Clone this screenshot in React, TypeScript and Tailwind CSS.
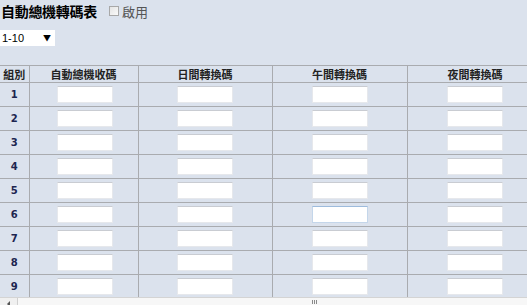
import React from "react";

const cols = ["自動總機收碼", "日間轉換碼", "午間轉換碼", "夜間轉換碼"];
const widths = ["w-[109px]", "w-[134px]", "w-[135px]", "w-[136px]"];
const rows = [1, 2, 3, 4, 5, 6, 7, 8, 9];

const App = () => {
  return (
    <div className="w-[527px] h-[305px] overflow-hidden bg-[#dbe2ed] flex flex-col font-['Noto_Sans_CJK_TC',sans-serif]">
      <div className="h-[297px] overflow-hidden">
        {/* title */}
        <div className="flex items-center h-[20px] pt-[2px] pl-[1px]">
          <span className="text-[14px] font-bold leading-none text-black tracking-[-0.3px] font-['Noto_Sans_CJK_TC',sans-serif]">
            自動總機轉碼表
          </span>
          <span className="ml-[12px] w-[10px] h-[10px] border border-[#a8a8a8] bg-gradient-to-br from-[#e4e4e4] to-[#fafafa]"></span>
          <span className="ml-[3px] text-[13px] leading-none text-[#555] font-['Noto_Sans_CJK_TC',sans-serif]">
            啟用
          </span>
        </div>

        {/* page select */}
        <div className="mt-[10px] w-[55px] h-[16px] bg-white flex items-center justify-between pl-[2px] pr-[4px]">
          <span className="text-[11px] leading-none text-black font-['Liberation_Sans',sans-serif]">1-10</span>
          <span className="text-[8px] leading-none text-black">▼</span>
        </div>

        {/* table */}
        <table className="mt-[19px] border-collapse table-fixed w-[543px]">
          <thead>
            <tr className="h-[17px]">
              <th className="w-[29px] border-t border-r border-[#a9abaf] text-[11px] font-bold text-[#222] leading-none p-0">
                組別
              </th>
              {cols.map((c, i) => (
                <th
                  key={c}
                  className={`${widths[i]} border-t border-r border-[#a9abaf] text-[11px] font-bold text-[#222] leading-none p-0`}
                >
                  {c}
                </th>
              ))}
            </tr>
          </thead>
          <tbody>
            {rows.map((r) => (
              <tr key={r} className="h-[24px]">
                <td className="border-t border-r border-[#a9abaf] text-center text-[10px] font-bold text-[#1d2550] p-0 font-['DejaVu_Sans',sans-serif]">
                  {r}
                </td>
                {cols.map((c, i) => (
                  <td key={c} className="border-t border-r border-[#a9abaf] p-0">
                    <div className="flex justify-center">
                      <div
                        className={`w-[56px] h-[17px] bg-white border ${
                          r === 6 && i === 2
                            ? "border-[#c4d6ea] border-t-[#9dbbdc]"
                            : "border-[#e6e8ec] border-t-[#c9ccd2]"
                        } ${i === 0 ? "ml-[3px]" : ""}`}
                      ></div>
                    </div>
                  </td>
                ))}
              </tr>
            ))}
          </tbody>
        </table>
      </div>

      {/* horizontal scrollbar */}
      <div className="h-[8px] bg-[#f0f0f0] border-t border-[#d4d4d4] flex items-start">
        <div className="w-[17px] flex justify-center pt-[3px]">
          <div className="w-0 h-0 border-y-[3px] border-y-transparent border-r-[3px] border-r-[#555]"></div>
        </div>
        <div className="flex-1 h-[7px] bg-[#f7f7f7] border-l border-[#d0d0d0] flex pt-[2px] pl-[294px]">
          <div className="flex gap-[1px]">
            <div className="w-[1px] h-[4px] bg-[#8a8a8a]"></div>
            <div className="w-[1px] h-[4px] bg-[#8a8a8a]"></div>
            <div className="w-[1px] h-[4px] bg-[#8a8a8a]"></div>
          </div>
        </div>
      </div>
    </div>
  );
};

export default App;
